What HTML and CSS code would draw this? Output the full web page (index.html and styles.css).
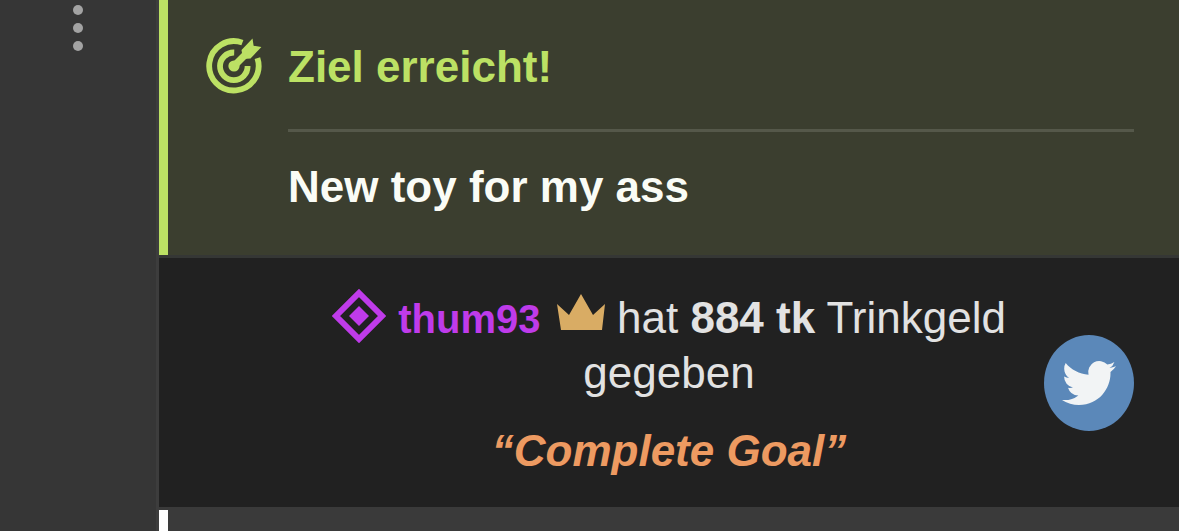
FILE: index.html
```
<!DOCTYPE html>
<html lang="de">
<head>
    <meta charset="UTF-8">
    <meta name="viewport" content="width=device-width, initial-scale=1.0">
    <title>Chat</title>
    <link rel="stylesheet" href="styles.css">
</head>
<body>
    <div class="container">
        <aside class="sidebar">
            <button class="menu" type="button" aria-label="Menü">
                <span class="dot"></span>
                <span class="dot"></span>
                <span class="dot"></span>
            </button>
        </aside>
        <main class="chat">
            <section class="goal">
                <!-- Zielscheibe mit Pfeil -->
                <svg class="goal-icon" viewBox="0 0 56 56" aria-hidden="true">
                    <g fill="none" stroke="currentColor" stroke-width="5.8">
                        <path d="M36.4 4.6A24.7 24.7 0 1 0 51.4 20.2"/>
                        <path d="M28.2 14.5A13.8 13.8 0 1 0 41.6 28"/>
                        <path d="M28 28L43 13" stroke-width="7"/>
                    </g>
                    <circle cx="28" cy="28" r="5.6" fill="currentColor"/>
                    <path d="M35.5 12L46.5 0.5L47.6 7.8L55.4 9L44.5 20.5L37 21Z" fill="currentColor"/>
                </svg>
                <div class="goal-content">
                    <h2 class="goal-title">Ziel erreicht!</h2>
                    <p class="goal-text">New toy for my ass</p>
                </div>
            </section>
            <section class="tip">
                <p class="tip-text">
                    <svg class="diamond" viewBox="0 0 54 54" aria-hidden="true">
                        <path d="M27 4L50 27L27 50L4 27Z" fill="none" stroke="currentColor" stroke-width="6"/>
                        <path d="M27 17L37 27L27 37L17 27Z" fill="currentColor"/>
                    </svg>
                    <a class="user" href="#">thum93</a>
                    <svg class="crown" viewBox="0 0 48 36" aria-hidden="true">
                        <path d="M0 10L12 21L24 0L36 21L48 10L45 36H4Z" fill="currentColor"/>
                    </svg>
                    hat <strong>884 tk</strong> Trinkgeld gegeben
                </p>
                <p class="tip-note">“Complete Goal”</p>
            </section>
            <section class="next"></section>
        </main>
        <button class="twitter" type="button" aria-label="Twitter">
            <svg class="bird" viewBox="0 0 24 24" aria-hidden="true">
                <path fill="currentColor" d="M23.953 4.57a10 10 0 0 1-2.825.775 4.958 4.958 0 0 0 2.163-2.723 9.99 9.99 0 0 1-3.127 1.184 4.92 4.92 0 0 0-8.384 4.482C7.69 8.095 4.067 6.13 1.64 3.162a4.822 4.822 0 0 0-.666 2.475c0 1.71.87 3.213 2.188 4.096a4.904 4.904 0 0 1-2.228-.616v.06a4.923 4.923 0 0 0 3.946 4.827 4.996 4.996 0 0 1-2.212.085 4.936 4.936 0 0 0 4.604 3.417 9.867 9.867 0 0 1-6.102 2.105c-.39 0-.779-.023-1.17-.067a13.995 13.995 0 0 0 7.557 2.209c9.053 0 13.998-7.496 13.998-13.985 0-.21 0-.42-.015-.63a9.935 9.935 0 0 0 2.46-2.548z"/>
            </svg>
        </button>
    </div>
</body>
</html>
```

FILE: styles.css
```
body {
    font-family: "Liberation Sans", Arial, sans-serif;
    font-size: 44px;
    line-height: 54px;
    margin: 0;
    background-color: #212121;
    color: #e2e2e2;
}

h2, p {
    margin: 0;
}

.container {
    display: grid;
    grid-template-columns: 159px 1fr;
    min-height: 100vh;
    position: relative;
}

.sidebar {
    background-color: #363636;
    border-right: 3px solid #3d3d3d;
}

.menu {
    display: flex;
    flex-direction: column;
    gap: 8px;
    margin: 0 auto;
    padding: 5px 0;
    border: none;
    background: none;
}

.dot {
    width: 10px;
    height: 10px;
    border-radius: 50%;
    background-color: #a3a3a3;
}

.chat {
    display: flex;
    flex-direction: column;
}

.goal {
    display: flex;
    align-items: flex-start;
    gap: 26px;
    padding: 38px 45px 41px 38px;
    border-left: 9px solid #bce164;
    background-color: #3b3e2f;
}

.goal-icon {
    width: 56px;
    height: 56px;
    flex: none;
    color: #bce164;
}

.goal-content {
    flex: 1;
}

.goal-title {
    padding: 2px 0 35px;
    border-bottom: 3px solid #55584a;
    color: #bce164;
    font-size: 44px;
}

.goal-text {
    padding-top: 28px;
    color: #fafcf6;
    font-weight: bold;
}

.tip {
    padding: 33px 150px 29px;
    border-top: 3px solid #353735;
    border-bottom: 3px solid #3a3a3a;
    text-align: center;
}

.diamond {
    width: 54px;
    height: 54px;
    margin: -6px 0;
    vertical-align: -4px;
    color: #bf3bea;
}

.user {
    margin-right: 4px;
    color: #bf3bea;
    font-size: 40px;
    font-weight: bold;
    text-decoration: none;
}

.crown {
    width: 48px;
    height: 36px;
    vertical-align: 3px;
    color: #d9ac64;
}

.tip-note {
    padding-top: 24px;
    color: #ed9a61;
    font-weight: bold;
    font-style: italic;
}

.next {
    flex: 1;
    border-left: 9px solid #ffffff;
    background-color: #3a3a3a;
}

/* schwebt über dem Chat */
.twitter {
    position: absolute;
    right: 45px;
    top: 335px;
    display: flex;
    align-items: center;
    justify-content: center;
    width: 90px;
    height: 96px;
    padding: 0;
    border: none;
    border-radius: 50%;
    background-color: #5b88b9;
    color: #f2f4f5;
}

.bird {
    width: 54px;
    height: 54px;
}
```
